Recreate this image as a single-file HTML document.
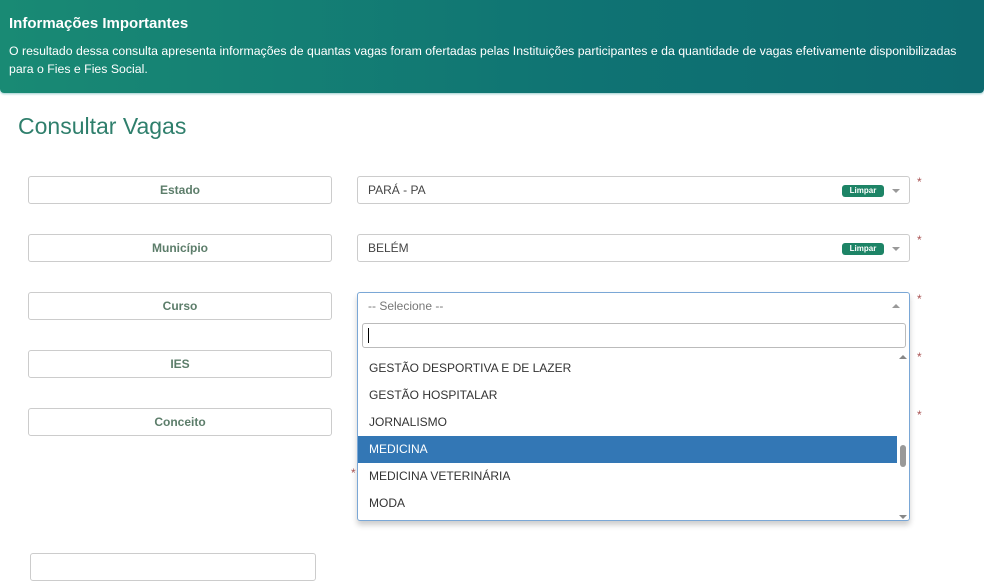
<!DOCTYPE html><html><head><meta charset="utf-8"><style>
*{box-sizing:border-box;margin:0;padding:0}
body{width:984px;height:557px;overflow:hidden;background:#fff;font-family:"Liberation Sans",sans-serif;position:relative;font-size:12px;color:#333}
.ban{position:absolute;left:0;top:0;width:984px;height:93px;background:linear-gradient(90deg,#198a74,#0f7373 60%,#0d6a6f);border-radius:0 0 4px 4px;color:#fff;box-shadow:0 1px 2px #9cc}
.ban h1{position:absolute;left:9px;top:15px;font-size:15px;font-weight:bold}
.ban p{position:absolute;left:9px;top:42px;font-size:12.3px;line-height:18px;width:970px}
h2{position:absolute;left:18px;top:113px;font-size:23px;font-weight:normal;color:#2f7f6c}
.lab{position:absolute;left:28px;width:304px;height:28px;border:1px solid #ccc;border-radius:3px;text-align:center;line-height:26px;font-weight:bold;color:#5c7d6a;font-size:12px}
.sel{position:absolute;left:357px;width:553px;height:28px;border:1px solid #ccc;border-radius:3px;line-height:26px;padding-left:10px;font-size:12px;color:#444}
.lim{position:absolute;right:25px;top:8px;width:42px;height:12px;background:#1d8466;border-radius:3px;color:#fff;font-size:8px;font-weight:bold;line-height:12px;text-align:center}
.car{position:absolute;right:9px;top:12px;border:4px solid transparent;border-top:4px solid #999;border-bottom:0}
.st{position:absolute;left:917px;color:#a55;font-size:12px}
.dd{position:absolute;left:357px;top:292px;width:553px;height:229px;border:1px solid #7aa7d6;border-radius:3px;box-shadow:0 4px 6px rgba(0,0,0,.2);background:#fff}
.opt{position:absolute;left:0;width:539px;height:27px;line-height:27px;padding-left:11px;font-size:12px;color:#333}
</style></head><body>
<div class="ban"><h1>Informações Importantes</h1><p>O resultado dessa consulta apresenta informações de quantas vagas foram ofertadas pelas Instituições participantes e da quantidade de vagas efetivamente disponibilizadas para o Fies e Fies Social.</p></div>
<h2>Consultar Vagas</h2>
<div class="lab" style="top:176px">Estado</div>
<div class="lab" style="top:234px">Município</div>
<div class="lab" style="top:292px">Curso</div>
<div class="lab" style="top:350px">IES</div>
<div class="lab" style="top:408px">Conceito</div>
<div class="lab" style="top:553px;left:30px;width:286px"></div>
<div class="sel" style="top:176px">PARÁ - PA<div class="lim">Limpar</div><div class="car"></div></div>
<div class="sel" style="top:234px">BELÉM<div class="lim">Limpar</div><div class="car"></div></div>
<div class="st" style="top:175px">*</div><div class="st" style="top:233px">*</div><div class="st" style="top:292px">*</div><div class="st" style="top:350px">*</div><div class="st" style="top:408px">*</div>
<div class="st" style="left:351px;top:466px">*</div>
<div class="dd">
<div style="position:absolute;left:10px;top:0;line-height:27px;color:#777">-- Selecione --</div>
<div style="position:absolute;right:9px;top:11px;border:4px solid transparent;border-bottom:4px solid #999;border-top:0"></div>
<div style="position:absolute;left:4px;top:30px;width:544px;height:25px;border:1px solid #bbb;border-radius:3px"><div style="position:absolute;left:5px;top:4px;width:1px;height:15px;background:#000"></div></div>
<div style="position:absolute;right:1px;top:62px;width:11px;height:164px"><div style="position:absolute;left:2px;top:0;border:4px solid transparent;border-bottom:4px solid #888;border-top:0"></div><div style="position:absolute;left:3px;top:90px;width:6px;height:22px;background:#999;border-radius:3px"></div><div style="position:absolute;left:2px;bottom:0;border:4px solid transparent;border-top:4px solid #888;border-bottom:0"></div></div>
<div class="opt" style="top:62px">GESTÃO DESPORTIVA E DE LAZER</div>
<div class="opt" style="top:89px">GESTÃO HOSPITALAR</div>
<div class="opt" style="top:116px">JORNALISMO</div>
<div class="opt" style="top:143px;background:#3377b5;color:#fff">MEDICINA</div>
<div class="opt" style="top:170px">MEDICINA VETERINÁRIA</div>
<div class="opt" style="top:197px">MODA</div>
</div>
</body></html>
